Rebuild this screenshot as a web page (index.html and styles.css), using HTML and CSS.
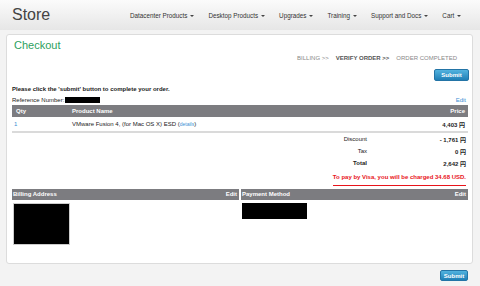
FILE: index.html
```html
<!DOCTYPE html>
<html>
<head>
	<title>Store - Checkout</title>
	<meta charset="utf-8">
	<link rel="stylesheet" href="styles.css">
</head>
<body>
	<header class="topbar">
		<div class="brand">Store</div>
		<nav class="nav">
			<a href="#">Datacenter Products<span class="caret"></span></a>
			<a href="#">Desktop Products<span class="caret"></span></a>
			<a href="#">Upgrades<span class="caret"></span></a>
			<a href="#">Training<span class="caret"></span></a>
			<a href="#">Support and Docs<span class="caret"></span></a>
			<a href="#">Cart<span class="caret"></span></a>
		</nav>
	</header>

	<main class="card">
		<h1 class="title">Checkout</h1>
		<div class="steps">
			<span>BILLING &gt;&gt;</span>
			<span class="current">VERIFY ORDER &gt;&gt;</span>
			<span>ORDER COMPLETED</span>
		</div>
		<div class="actions">
			<button class="submit">Submit</button>
		</div>

		<p class="notice">Please click the 'submit' button to complete your order.</p>
		<div class="ref-row">
			<span>Reference Number:<span class="redacted ref-box"></span></span>
			<a href="#" class="link">Edit</a>
		</div>

		<table class="items">
			<tr>
				<th class="qty">Qty</th>
				<th class="name">Product Name</th>
				<th class="price">Price</th>
			</tr>
			<tr>
				<td class="qty"><a href="#" class="link">1</a></td>
				<td class="name">VMware Fusion 4, (for Mac OS X) ESD (<a href="#" class="link small">details</a>)</td>
				<td class="price">4,403 円</td>
			</tr>
		</table>

		<div class="totals">
			<span class="label">Discount</span><span class="value">- 1,761 円</span>
			<span class="label">Tax</span><span class="value">0 円</span>
			<span class="label strong">Total</span><span class="value">2,642 円</span>
		</div>
		<div class="charge">
			<span>To pay by Visa, you will be charged 34.68 USD.</span>
		</div>

		<div class="panels">
			<section class="panel">
				<div class="panel-head"><span>Billing Address</span><span>Edit</span></div>
				<div class="panel-body"><span class="redacted address-box"></span></div>
			</section>
			<section class="panel">
				<div class="panel-head"><span>Payment Method</span><span>Edit</span></div>
				<div class="panel-body"><span class="redacted card-box"></span></div>
			</section>
		</div>
	</main>

	<div class="actions bottom">
		<button class="submit small-btn">Submit</button>
	</div>
</body>
</html>
```

FILE: styles.css
```css
*{
	box-sizing: border-box;
}

body{
	margin: 0;
	font-family: "Liberation Sans", Arial, "Noto Sans CJK JP", sans-serif;
	font-size: 6px;
	color: #222;
	background: #f3f3f3;
}

a{
	text-decoration: none;
	color: inherit;
}

.topbar{
	display: flex;
	align-items: center;
	height: 30px;
	padding: 0 12px;
	background: linear-gradient(#fbfbfb, #e6e6e6);
}

.brand{
	width: 118px;
	font-size: 16px;
	color: #444;
	margin-top: -1px;
}

.nav{
	display: flex;
	gap: 14px;
	font-size: 6.3px;
	color: #333;
}

.caret{
	display: inline-block;
	vertical-align: middle;
	margin-left: 3px;
	border-top: 2px solid #444;
	border-left: 2px solid transparent;
	border-right: 2px solid transparent;
}

.card{
	margin: 4px 7px 0 6px;
	padding: 4px 4px 18px 5px;
	background: #fff;
	border: 1px solid #dcdcdc;
	border-radius: 3px;
}

.title{
	margin: 0;
	padding-left: 2px;
	font-size: 11px;
	line-height: 13px;
	font-weight: normal;
	color: #2d9f5e;
}

.steps{
	display: flex;
	justify-content: flex-end;
	gap: 7px;
	padding-right: 11px;
	line-height: 12px;
	color: #888;
}

.steps .current{
	font-weight: bold;
	color: #555;
}

.actions{
	display: flex;
	justify-content: flex-end;
	margin-top: 5px;
	margin-right: -1px;
}

.submit{
	width: 35px;
	height: 12px;
	padding: 0;
	border: 1px solid #2374a6;
	border-radius: 2px;
	background: linear-gradient(#52b3df, #1f7fb6);
	color: #fff;
	font-family: inherit;
	font-size: 6px;
	font-weight: bold;
}

.notice{
	margin: 3px 0 0;
	line-height: 11px;
	font-weight: bold;
}

.ref-row{
	display: flex;
	justify-content: space-between;
	line-height: 10px;
	padding-right: 2px;
}

.link{
	color: #3b8fd4;
}

.small{
	font-size: 5px;
}

.redacted{
	display: inline-block;
	background: #000;
	vertical-align: middle;
}

.ref-box{
	width: 35px;
	height: 6px;
	margin-left: 1px;
}

.items{
	width: 100%;
	border-collapse: collapse;
	table-layout: fixed;
	border-bottom: 2px solid #dadada;
}

.items th{
	height: 12px;
	padding: 0;
	background: #7c7c80;
	color: #fff;
	text-align: left;
}

.items td{
	height: 15px;
	padding: 0;
}

.items .qty{
	width: 60px;
	padding-left: 2px;
}

.items th.qty{
	padding-left: 4px;
}

.items .price{
	width: 80px;
	text-align: right;
	padding-right: 3px;
}

.items td.price{
	font-weight: bold;
}

.totals{
	display: grid;
	grid-template-columns: 1fr 101px;
	grid-auto-rows: 12px;
	align-items: center;
}

.totals .label{
	text-align: right;
}

.totals .strong{
	font-weight: bold;
}

.totals .value{
	text-align: right;
	padding-right: 2px;
	font-weight: bold;
}

.charge{
	display: flex;
	justify-content: flex-end;
	margin-top: 3px;
	padding-right: 2px;
}

.charge span{
	padding-bottom: 3px;
	line-height: 10px;
	border-bottom: 1px solid #e8141b;
	color: #e8141b;
	font-weight: bold;
}

.panels{
	display: grid;
	grid-template-columns: 1fr 1fr;
	gap: 2px;
	margin-top: 3px;
}

.panel-head{
	display: flex;
	justify-content: space-between;
	height: 11px;
	padding: 0 2px 0 1px;
	line-height: 11px;
	background: #7c7c80;
	color: #fff;
	font-weight: bold;
}

.panel-body{
	padding: 3px 0 0 1px;
}

.address-box{
	width: 57px;
	height: 42px;
	border: 1px solid #ccc;
}

.card-box{
	width: 65px;
	height: 16px;
}

.bottom{
	margin: 6px 12px 0 0;
}

.small-btn{
	width: 28px;
	height: 11px;
}
```
